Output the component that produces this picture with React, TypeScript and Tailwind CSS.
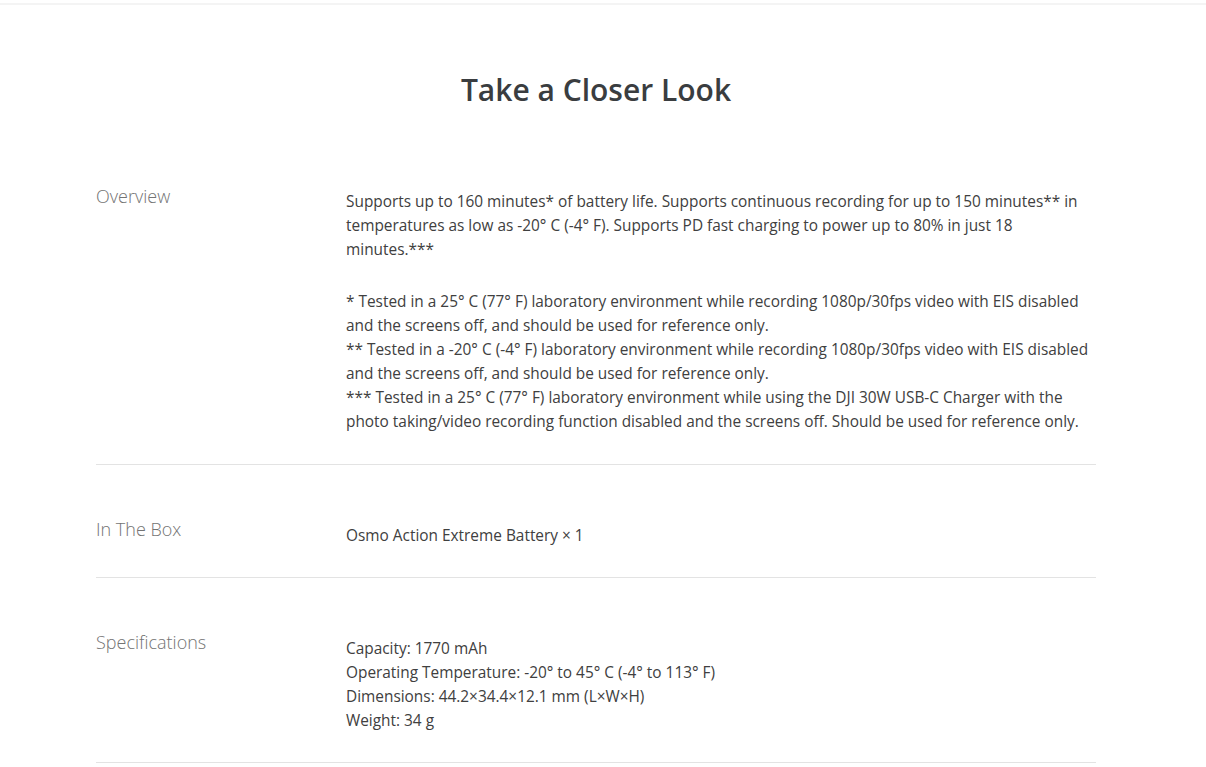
import React from 'react';

interface IRow {
  label: string;
  paragraphs: string[][];
}

const rows: IRow[] = [
  {
    label: 'Overview',
    paragraphs: [
      [
        'Supports up to 160 minutes* of battery life. Supports continuous recording for up to 150 minutes** in temperatures as low as -20° C (-4° F). Supports PD fast charging to power up to 80% in just 18 minutes.***',
      ],
      [
        '* Tested in a 25° C (77° F) laboratory environment while recording 1080p/30fps video with EIS disabled and the screens off, and should be used for reference only.',
        '** Tested in a -20° C (-4° F) laboratory environment while recording 1080p/30fps video with EIS disabled and the screens off, and should be used for reference only.',
        '*** Tested in a 25° C (77° F) laboratory environment while using the DJI 30W USB-C Charger with the photo taking/video recording function disabled and the screens off. Should be used for reference only.',
      ],
    ],
  },
  {
    label: 'In The Box',
    paragraphs: [['Osmo Action Extreme Battery × 1']],
  },
  {
    label: 'Specifications',
    paragraphs: [
      [
        'Capacity: 1770 mAh',
        'Operating Temperature: -20° to 45° C (-4° to 113° F)',
        'Dimensions: 44.2×34.4×12.1 mm (L×W×H)',
        'Weight: 34 g',
      ],
    ],
  },
];

const App = () => {
  return (
    <div className="min-h-screen bg-white font-['Open_Sans',sans-serif]">
      <div className="pt-[3px]">
        <div className="h-[2px] bg-[#f4f4f4]" />
      </div>
      <div className="w-[1192px]">
        <h2 className="pt-[65px] text-center text-[30px] leading-[40px] font-semibold text-[#3a3d40]">
          Take a Closer Look
        </h2>
        <section className="mx-auto mt-[21px] w-[1000px]">
          {rows.map((row, i) => (
            <div
              key={row.label}
              className={`flex border-b border-[#e3e3e3] ${i === 0 ? 'pt-[53px] pb-[30px]' : 'pt-[52px] pb-[29px]'}`}
            >
              <p className="w-[250px] shrink-0 text-[18px] leading-6 font-light text-[#737373]">{row.label}</p>
              <div
                className={`flex flex-1 flex-col gap-[28px] pr-[4px] text-[15.4px] leading-6 text-[#404040] ${i === 0 ? 'pt-[6px]' : 'pt-[7px]'}`}
              >
                {row.paragraphs.map((para, j) => (
                  <div key={j}>
                    {para.map((line) => (
                      <p key={line}>{line}</p>
                    ))}
                  </div>
                ))}
              </div>
            </div>
          ))}
        </section>
      </div>
    </div>
  );
};

export default App;
